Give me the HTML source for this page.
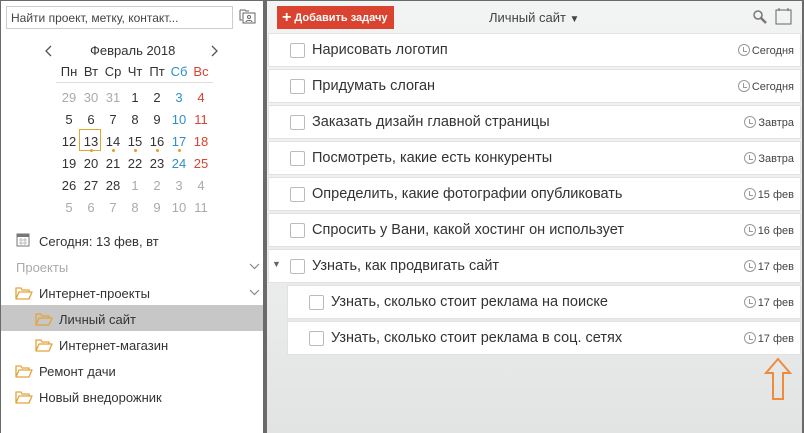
<!DOCTYPE html>
<html><head><meta charset="utf-8"><style>
*{box-sizing:border-box;margin:0;padding:0}
body{width:804px;height:433px;overflow:hidden;font-family:"Liberation Sans","DejaVu Sans",sans-serif;background:#6a6a6a;position:relative}
#side{position:absolute;left:1px;top:1px;width:262px;height:432px;background:#fff}
#main{position:absolute;left:267px;top:1px;width:535px;height:432px;background:linear-gradient(180deg,#f2f3f3 0%,#eceeee 60%,#e2e4e3 100%)}
.search{position:absolute;left:5px;top:5px;width:227px;height:23px;border:1px solid #ccc;font-size:12px;color:#444;padding:4px 4px}
.cal{position:absolute;font-size:13px;color:#333;text-align:center;width:22px}
.abs{position:absolute}
.task{position:absolute;background:#fff;height:34px;border:1px solid #e2e2e2;font-size:14.5px;color:#333}
.task .cb{position:absolute;top:9px;width:15px;height:15px;border:1px solid #bbb;border-radius:2px}
.task .t{position:absolute;top:8px}
.task .d{position:absolute;right:6px;top:10px;font-size:11px;color:#444}
.clk{display:inline-block;width:12px;height:12px;border:1px solid #999;border-radius:50%;vertical-align:-2px;margin-right:2px;position:relative}
.clk:after{content:"";position:absolute;left:4px;top:2px;width:3px;height:4px;border-left:1px solid #999;border-bottom:1px solid #999}
.it{position:absolute;font-size:13px;color:#333;white-space:nowrap}
.fold{display:inline-block;vertical-align:-2px;margin-right:6px}
</style></head><body>
<svg width="0" height="0" style="position:absolute"><defs><symbol id="f" viewBox="0 0 18 13"><path d="M1 12V1h5l1 2h7v2M1 12l3-7h13l-3 7z" fill="none" stroke="#e3a43a" stroke-width="1.3" stroke-linejoin="round"/></symbol></defs></svg>
<div id="side">
<div class="search">Найти проект, метку, контакт...</div>
<svg class="abs" style="left:238px;top:6px" width="18" height="18" viewBox="0 0 18 18" fill="none" stroke="#666"><path d="M1 3h5l1 1h3M1 3v10h2"/><rect x="4" y="6" width="12" height="10"/><circle cx="10" cy="10" r="1.5"/><path d="M7 15c0-2 6-2 6 0"/></svg>
<svg class="abs" style="left:44px;top:44px" width="8" height="12" viewBox="0 0 8 12" fill="none" stroke="#555" stroke-width="1.3"><path d="M6 1L1 6l5 5"/></svg>
<svg class="abs" style="left:209px;top:44px" width="8" height="12" viewBox="0 0 8 12" fill="none" stroke="#555" stroke-width="1.3"><path d="M2 1l5 5-5 5"/></svg>
<div class="abs" style="left:89px;top:42px;font-size:13px;color:#333">Февраль 2018</div>
<div class="abs" style="left:55px;top:81px;width:157px;height:1px;background:#ddd"></div>
<div id="calg"></div>
<div class="abs" style="left:78px;top:128px;width:22px;height:22px;border:1px solid #e0a82e"></div>
<svg class="abs" style="left:15px;top:231px" width="14" height="15" viewBox="0 0 14 15"><rect x="1" y="2" width="12" height="12" fill="none" stroke="#777"/><rect x="1" y="2" width="12" height="3" fill="#777"/><path d="M3 8h8M3 11h8M5 6v7M9 6v7" stroke="#bbb"/></svg>
<div class="it" style="left:38px;top:233px">Сегодня: 13 фев, вт</div>
<div class="it" style="left:15px;top:259px;color:#aaa">Проекты</div>
<svg class="abs" style="left:248px;top:262px" width="11" height="7" viewBox="0 0 11 7" fill="none" stroke="#888" stroke-width="1.2"><path d="M1 1l4.5 4.5L10 1"/></svg>
<div class="it" style="left:14px;top:285px"><svg class="fold" width="18" height="13"><use href="#f"/></svg>Интернет-проекты</div>
<svg class="abs" style="left:248px;top:288px" width="11" height="7" viewBox="0 0 11 7" fill="none" stroke="#888" stroke-width="1.2"><path d="M1 1l4.5 4.5L10 1"/></svg>
<div class="abs" style="left:0;top:304px;width:262px;height:26px;background:#c8c7c8"></div>
<div class="it" style="left:34px;top:311px"><svg class="fold" width="18" height="13"><use href="#f"/></svg>Личный сайт</div>
<div class="it" style="left:34px;top:337px"><svg class="fold" width="18" height="13"><use href="#f"/></svg>Интернет-магазин</div>
<div class="it" style="left:14px;top:363px"><svg class="fold" width="18" height="13"><use href="#f"/></svg>Ремонт дачи</div>
<div class="it" style="left:14px;top:389px"><svg class="fold" width="18" height="13"><use href="#f"/></svg>Новый внедорожник</div>
</div>
<div id="main">
<div class="abs" style="left:10px;top:5px;width:117px;height:23px;background:#d9432f;color:#fff;font-size:11px;font-weight:bold;padding:0 5px;line-height:23px;white-space:nowrap"><span style="font-size:16px;vertical-align:-1px">+</span> Добавить задачу</div>
<div class="abs" style="left:222px;top:9px;font-size:13px;color:#444">Личный сайт <span style="font-size:10px">▼</span></div>
<svg class="abs" style="left:485px;top:8px" width="16" height="16" viewBox="0 0 16 16" fill="none" stroke="#777" stroke-width="1.5"><circle cx="6" cy="6" r="4"/><path d="M9 9l5 5" stroke-width="2.5"/></svg>
<svg class="abs" style="left:508px;top:6px" width="17" height="18" viewBox="0 0 17 18" fill="none" stroke="#666"><rect x="1" y="3" width="15" height="14"/><path d="M4 1v3M13 1v3"/></svg>
<div id="tasks"></div>
<svg class="abs" style="left:497px;top:356px" width="28" height="44" viewBox="0 0 28 44" fill="none" stroke="#f08a3c" stroke-width="2"><path d="M14 2L2 16h7v26h10V16h7z"/></svg>
</div>
<script>
var g=document.getElementById('calg'),h='';
var hd=['Пн','Вт','Ср','Чт','Пт','Сб','Вс'];
var xs=[56,78,100,122,144,166,188];
hd.forEach(function(d,i){h+='<div class="cal" style="left:'+(xs[i]+1)+'px;top:63px;color:'+(i==5?'#2f8fc6':i==6?'#d9432f':'#333')+'">'+d+'</div>'});
var rows=[[29,30,31,1,2,3,4],[5,6,7,8,9,10,11],[12,13,14,15,16,17,18],[19,20,21,22,23,24,25],[26,27,28,1,2,3,4],[5,6,7,8,9,10,11]];
rows.forEach(function(r,ri){r.forEach(function(n,i){var grey=(ri==0&&i<3)||ri==5||(ri==4&&i>2);var c=grey?'#aaa':i==5?'#2f8fc6':i==6?'#d9432f':'#333';h+='<div class="cal" style="left:'+(xs[i]+1)+'px;top:'+(89+ri*22)+'px;color:'+c+'">'+n+'</div>';if(ri==2&&i>0&&i<6)h+='<div class="abs" style="left:'+(xs[i]+11)+'px;top:148px;width:3px;height:3px;border-radius:50%;background:#e89a2a"></div>'})});
g.innerHTML=h;
var T=[['Нарисовать логотип','Сегодня',0],['Придумать слоган','Сегодня',0],['Заказать дизайн главной страницы','Завтра',0],['Посмотреть, какие есть конкуренты','Завтра',0],['Определить, какие фотографии опубликовать','15 фев',0],['Спросить у Вани, какой хостинг он использует','16 фев',0],['Узнать, как продвигать сайт','17 фев',2],['Узнать, сколько стоит реклама на поиске','17 фев',1],['Узнать, сколько стоит реклама в соц. сетях','17 фев',1]];
var s='';
T.forEach(function(t,i){var l=t[2]==1?20:1;var y=32+i*36;s+='<div class="task" style="left:'+l+'px;top:'+y+'px;width:'+(534-l)+'px">'+(t[2]==2?'<span class="abs" style="left:3px;top:9px;font-size:9px;color:#666">▼</span>':'')+'<div class="cb" style="left:21px"></div><div class="t" style="left:43px">'+t[0]+'</div><div class="d"><span class="clk"></span>'+t[1]+'</div></div>'});
document.getElementById('tasks').innerHTML=s;
</script>
</body></html>
